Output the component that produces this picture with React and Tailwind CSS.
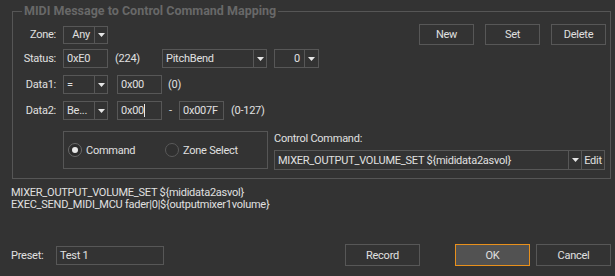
import React from "react";

const Arrow = () => (
  <svg width="7" height="4" viewBox="0 0 7 4" className="block">
    <polygon points="0,0 7,0 3.5,4" fill="#e6e6e6" />
  </svg>
);

function Combo({ w, arrowW = 13, text, align = "left", h = "h-[19px]" }) {
  return (
    <div className={`flex ${h} border border-[#575757] shrink-0`} style={{ width: w }}>
      <div className={`flex-1 flex items-center px-[3px] ${align === "right" ? "justify-end pr-[4px]" : ""}`}>
        {text}
      </div>
      <div className="flex items-center justify-center border-l border-[#575757]" style={{ width: arrowW }}>
        <Arrow />
      </div>
    </div>
  );
}

function TextBox({ w = 45, text, caret = false }) {
  return (
    <div className="flex items-center h-[19px] border border-[#575757] px-[3px] shrink-0" style={{ width: w }}>
      <span>{text}</span>
      {caret && <span className="inline-block w-px h-[13px] bg-[#e6e6e6]" />}
    </div>
  );
}

function Btn({ children, w, h, ok = false }) {
  return (
    <div
      className={`flex items-center justify-center shrink-0 border ${ok ? "border-[#e8901c] bg-[#525252]" : "border-[#575757]"}`}
      style={{ width: w, height: h }}
    >
      {children}
    </div>
  );
}

export default function App() {
  return (
    <div className="w-[615px] h-[276px] bg-[#333333] text-[#e0e0e0] text-[11px] leading-[13px] tracking-[-0.25px] font-['Roboto','Liberation_Sans',sans-serif] overflow-hidden">
      <div className="h-[11px]" />
      <div className="relative ml-[12px] w-[599px] h-[168px] border border-[#565656]">
        <div className="absolute left-[9px] top-[-9px] px-[2px] bg-[#333333] text-[12.5px] leading-[16px] tracking-normal font-bold text-[#686868]">
          MIDI Message to Control Command Mapping
        </div>

        {/* Zone row */}
        <div className="flex items-center h-[21px] mt-[12px]">
          <div className="w-[43px] text-right">Zone:</div>
          <div className="ml-[7px]">
            <Combo w={45} text="Any" align="right" h="h-[18px]" />
          </div>
          <div className="ml-auto mr-[4px] flex gap-[11px]">
            <Btn w={55} h={21}>New</Btn>
            <Btn w={55} h={21}>Set</Btn>
            <Btn w={55} h={21}>Delete</Btn>
          </div>
        </div>

        {/* Status row */}
        <div className="flex items-center h-[19px] mt-[4px]">
          <div className="w-[43px] text-right">Status:</div>
          <div className="ml-[7px]"><TextBox text="0xE0" /></div>
          <div className="ml-[7px] w-[47px]">(224)</div>
          <Combo w={105} text="PitchBend" />
          <div className="ml-[7px]">
            <Combo w={45} arrowW={14} text="0" align="right" />
          </div>
        </div>

        {/* Data1 row */}
        <div className="flex items-center h-[19px] mt-[7px]">
          <div className="w-[43px] text-right">Data1:</div>
          <div className="ml-[7px]"><Combo w={45} text="=" /></div>
          <div className="ml-[9px]"><TextBox text="0x00" /></div>
          <div className="ml-[6px]">(0)</div>
        </div>

        {/* Data2 row */}
        <div className="flex items-center h-[19px] mt-[7px]">
          <div className="w-[43px] text-right">Data2:</div>
          <div className="ml-[7px]"><Combo w={45} text="Be..." /></div>
          <div className="ml-[9px]"><TextBox text="0x00" caret /></div>
          <div className="w-[17px] text-center">-</div>
          <TextBox text="0x007F" />
          <div className="ml-[7px]">(0-127)</div>
        </div>

        {/* Radio + control command */}
        <div className="flex mt-[11px]">
          <div className="ml-[50px] w-[205px] h-[38px] border border-[#565656] flex items-center pl-[4px]">
            <div className="flex items-center w-[97px]">
              <div className="w-[14px] h-[14px] rounded-full border border-[#6a6a6a] bg-[#2c2c2c] flex items-center justify-center">
                <div className="w-[6px] h-[6px] rounded-full bg-[#e8e8e8]" />
              </div>
              <span className="ml-[4px]">Command</span>
            </div>
            <div className="flex items-center">
              <div className="w-[14px] h-[14px] rounded-full border border-[#5a5a5a] bg-[#303030]" />
              <span className="ml-[4px]">Zone Select</span>
            </div>
          </div>
          <div className="ml-[6px] flex flex-col">
            <div className="h-[14px] flex items-center">Control Command:</div>
            <div className="mt-[5px] flex h-[20px] w-[331px] border border-[#575757]">
              <div className="flex-1 flex items-center px-[3px]">MIXER_OUTPUT_VOLUME_SET ${"{mididata2asvol}"}</div>
              <div className="w-[13px] flex items-center justify-center border-l border-[#575757]">
                <Arrow />
              </div>
              <div className="w-[23px] flex items-center justify-center border-l border-[#575757]">Edit</div>
            </div>
          </div>
        </div>
      </div>

      {/* Command text */}
      <div className="mt-[8px] pl-[11px] leading-[12px]">
        <div>MIXER_OUTPUT_VOLUME_SET ${"{mididata2asvol}"}</div>
        <div>EXEC_SEND_MIDI_MCU fader|0|${"{outputmixer1volume}"}</div>
      </div>

      {/* Bottom row */}
      <div className="flex items-center h-[22px] mt-[33px] pl-[11px]">
        <div className="w-[45px]">Preset:</div>
        <div className="flex items-center h-[19px] w-[108px] border border-[#575757] px-[3px]">Test 1</div>
        <div className="ml-[181px]"><Btn w={75} h={22}>Record</Btn></div>
        <div className="ml-[35px]"><Btn w={75} h={22} ok>OK</Btn></div>
        <div className="ml-[6px]"><Btn w={75} h={22}>Cancel</Btn></div>
      </div>
    </div>
  );
}
